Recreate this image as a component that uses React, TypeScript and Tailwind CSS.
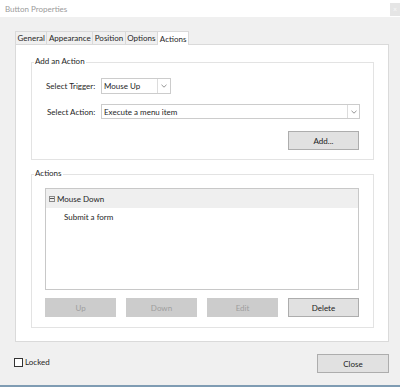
import React from "react";

const font = { fontFamily: 'Lato, "Open Sans", sans-serif' };

function Btn({ label, disabled, w = "w-[71px]", h = "h-[19px]" }: { label: string; disabled?: boolean; w?: string; h?: string }) {
  return disabled ? (
    <div className={`${w} ${h} bg-[#cccccc] border border-[#cccccc] flex items-center justify-center text-[8px] text-[#9e9e9e]`}>{label}</div>
  ) : (
    <div className={`${w} ${h} bg-[#e1e1e1] border border-[#adadad] flex items-center justify-center text-[8px] text-[#222]`}>{label}</div>
  );
}

function Chevron() {
  return (
    <svg width="6" height="4" viewBox="0 0 6 4">
      <path d="M0.5 0.8 L3 3.2 L5.5 0.8" fill="none" stroke="#777" strokeWidth="0.8" />
    </svg>
  );
}

export default function App() {
  const tabs = ["General", "Appearance", "Position", "Options"];
  return (
    <div className="w-[400px] h-[387px] bg-[#f0f0f0] flex flex-col relative overflow-hidden text-[#262626]" style={font}>
      {/* title bar */}
      <div className="h-[17px] bg-white flex items-center pl-[5px] relative shrink-0">
        <span className="text-[8px] text-[#9b9b9b]">Button Properties</span>
        <div className="absolute right-0 top-[3px] w-[10px] h-[13px] bg-[#e5e5e5] flex items-center justify-center text-[7px] text-[#f8f8f8]">×</div>
      </div>

      {/* tabs */}
      <div className="flex items-end pl-[15px] mt-[13px] h-[14px] shrink-0">
        {tabs.map((t) => (
          <div key={t} className="h-[13px] px-[1.5px] border-t border-l border-[#dadada] bg-[#f0f0f0] flex items-center text-[8px] leading-none">{t}</div>
        ))}
        <div className="h-[14px] px-[2px] border-t border-l border-r border-[#dadada] bg-white flex items-center text-[8px] leading-none -mb-px relative z-10">Actions</div>
      </div>

      {/* panel */}
      <div className="ml-[15px] w-[374px] h-[298px] bg-white border border-[#dadada] shrink-0 pt-[17px] pl-[15px]">
        {/* group 1 */}
        <div className="relative w-[343px] h-[98px] border border-[#e3e3e3]">
          <span className="absolute -top-[6px] left-[2px] bg-white px-[1px] text-[8px] leading-none">Add an Action</span>
          <div className="flex items-center pl-[14px] mt-[15px] h-[16px]">
            <span className="w-[55px] text-[8px]">Select Trigger:</span>
            <div className="w-[70px] h-[16px] border border-[#cccccc] flex items-center">
              <span className="flex-1 pl-[2px] text-[8px]">Mouse Up</span>
              <div className="w-[13px] h-full border-l border-[#dcdcdc] flex items-center justify-center"><Chevron /></div>
            </div>
          </div>
          <div className="flex items-center pl-[14px] mt-[10px] h-[15px]">
            <span className="w-[55px] text-[8px] pl-px">Select Action:</span>
            <div className="w-[259px] h-[15px] border border-[#cccccc] flex items-center">
              <span className="flex-1 pl-[2px] text-[8px]">Execute a menu item</span>
              <div className="w-[12px] h-full border-l border-[#dcdcdc] flex items-center justify-center"><Chevron /></div>
            </div>
          </div>
          <div className="flex justify-end pr-[14px] mt-[12px]">
            <Btn label="Add..." />
          </div>
        </div>

        {/* group 2 */}
        <div className="relative w-[343px] h-[154px] border border-[#e3e3e3] mt-[14px] pt-[13px] pl-[13px]">
          <span className="absolute -top-[6px] left-[2px] bg-white px-[1px] text-[8px] leading-none">Actions</span>
          <div className="w-[314px] h-[102px] border border-[#c8c8c8] bg-white">
            <div className="h-[19px] bg-[#efefef] flex items-center pl-[3px]">
              <div className="w-[6px] h-[6px] border border-[#8a8a8a] flex items-center justify-center mr-[2px]">
                <div className="w-[4px] h-px bg-[#555]" />
              </div>
              <span className="text-[8px]">Mouse Down</span>
            </div>
            <div className="h-[18px] flex items-center pl-[18px] text-[8px]">Submit a form</div>
          </div>
          <div className="flex gap-[10px] mt-[8px]">
            <Btn label="Up" disabled />
            <Btn label="Down" disabled />
            <Btn label="Edit" disabled />
            <Btn label="Delete" />
          </div>
        </div>
      </div>

      {/* footer */}
      <div className="flex items-start justify-between pl-[14px] pr-[11px] mt-[12px] h-[19px]">
        <div className="flex items-center gap-[2px] mt-[2px]">
          <div className="w-[9px] h-[9px] border border-[#333] bg-white" />
          <span className="text-[8px]">Locked</span>
        </div>
        <Btn label="Close" w="w-[72px]" h="h-[19px]" />
      </div>

      <div className="absolute left-0 bottom-0 w-full h-[2px] bg-[#7f9cb3]" />
    </div>
  );
}
